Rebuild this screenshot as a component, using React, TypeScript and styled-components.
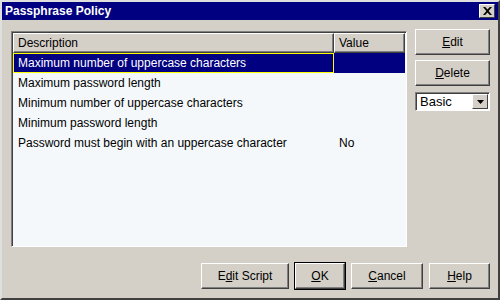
import React from "react";
import styled, { createGlobalStyle } from "styled-components";

const Global = createGlobalStyle`
  html, body { margin: 0; padding: 0; background: #d4d0c8; }
  * { box-sizing: border-box; }
`;

const Window = styled.div`
  width: 500px;
  height: 300px;
  display: flex;
  flex-direction: column;
  background: #d4d0c8;
  border: 2px solid;
  border-color: #dfdfdf #404040 #404040 #dfdfdf;
  font-family: "Liberation Sans", Arial, sans-serif;
  font-size: 12px;
  color: #000;
`;

const TitleBar = styled.div`
  height: 18px;
  background: #000080;
  color: #fff;
  font-weight: bold;
  font-size: 12px;
  display: flex;
  align-items: center;
  justify-content: space-between;
  padding: 0 3px 0 3px;
`;

const CloseBox = styled.div`
  width: 16px;
  height: 14px;
  background: #d4d0c8;
  border: 1px solid;
  border-color: #fff #404040 #404040 #fff;
  display: flex;
  align-items: center;
  justify-content: center;
`;

const Body = styled.div`
  flex: 1;
  display: flex;
  flex-direction: column;
  padding: 11px 8px 8px 9px;
`;

const Main = styled.div`
  display: flex;
  gap: 8px;
  height: 216px;
`;

const ListPanel = styled.div`
  flex: 1;
  background: #f4f8fb;
  border: 1px solid;
  border-color: #808080 #fff #fff #808080;
  box-shadow: inset 1px 1px 0 #404040;
  display: flex;
  flex-direction: column;
  padding: 1px 1px 0 1px;
`;

const Row = styled.div`
  display: grid;
  grid-template-columns: 321px 71px;
  height: 20px;
`;

const HeadCell = styled.div`
  background: #d4d0c8;
  border: 1px solid;
  border-color: #fff #404040 #404040 #fff;
  box-shadow: inset -1px -1px 0 #808080;
  display: flex;
  align-items: center;
  padding-left: 4px;
`;

const Cell = styled.div<{ $sel?: boolean; $focus?: boolean }>`
  display: flex;
  align-items: center;
  padding-left: 4px;
  background: ${(p) => (p.$sel ? "#000080" : "transparent")};
  color: ${(p) => (p.$sel ? "#fff" : "#000")};
  border: 1px solid ${(p) => (p.$focus ? "#ffff00" : "transparent")};
  white-space: nowrap;
`;

const Side = styled.div`
  width: 77px;
  display: flex;
  flex-direction: column;
  gap: 5px;
  margin-top: -2px;
`;

const Button = styled.button<{ $w?: number; $def?: boolean }>`
  font-family: inherit;
  font-size: 12px;
  color: #000;
  height: 26px;
  width: ${(p) => (p.$w ? `${p.$w}px` : "100%")};
  background: #d4d0c8;
  padding: 0;
  border: 1px solid;
  border-color: #fff #404040 #404040 #fff;
  box-shadow: inset -1px -1px 0 #808080;
  outline: ${(p) => (p.$def ? "1px solid #000" : "none")};
  outline-offset: 0;
  u { text-decoration: underline; }
`;

const Select = styled.div`
  height: 19px;
  width: 75px;
  margin-top: 1px;
  background: #fff;
  border: 1px solid;
  border-color: #808080 #fff #fff #808080;
  box-shadow: inset 1px 1px 0 #404040;
  display: flex;
  align-items: center;
  justify-content: space-between;
  padding: 1px 1px 1px 4px;
  font-size: 13px;
`;

const Arrow = styled.div`
  width: 16px;
  height: 15px;
  background: #d4d0c8;
  border: 1px solid;
  border-color: #fff #404040 #404040 #fff;
  display: flex;
  align-items: center;
  justify-content: center;
`;

const Footer = styled.div`
  margin-top: 16px;
  display: flex;
  justify-content: flex-end;
  gap: 6px;
`;

const rows = [
  ["Maximum number of uppercase characters", ""],
  ["Maximum password length", ""],
  ["Minimum number of uppercase characters", ""],
  ["Minimum password length", ""],
  ["Password must begin with an uppercase character", "No"],
];

export default function App() {
  return (
    <>
      <Global />
      <Window>
        <TitleBar>
          <span>Passphrase Policy</span>
          <CloseBox>
            <svg width="9" height="8" viewBox="0 0 9 8">
              <path d="M0 0h2.2l2.3 2.6L6.8 0H9L5.6 4 9 8H6.8L4.5 5.4 2.2 8H0l3.4-4z" fill="#000" />
            </svg>
          </CloseBox>
        </TitleBar>
        <Body>
          <Main>
            <ListPanel>
              <Row>
                <HeadCell>Description</HeadCell>
                <HeadCell>Value</HeadCell>
              </Row>
              {rows.map(([d, v], i) => (
                <Row key={i}>
                  <Cell $sel={i === 0} $focus={i === 0}>{d}</Cell>
                  <Cell $sel={i === 0}>{v}</Cell>
                </Row>
              ))}
            </ListPanel>
            <Side>
              <Button><u>E</u>dit</Button>
              <Button><u>D</u>elete</Button>
              <Select>
                <span>Basic</span>
                <Arrow>
                  <svg width="7" height="4" viewBox="0 0 7 4">
                    <path d="M0 0h7L3.5 4z" fill="#000" />
                  </svg>
                </Arrow>
              </Select>
            </Side>
          </Main>
          <Footer>
            <Button $w={88}>E<u>d</u>it Script</Button>
            <Button $w={50} $def><u>O</u>K</Button>
            <Button $w={72}><u>C</u>ancel</Button>
            <Button $w={61}><u>H</u>elp</Button>
          </Footer>
        </Body>
      </Window>
    </>
  );
}
